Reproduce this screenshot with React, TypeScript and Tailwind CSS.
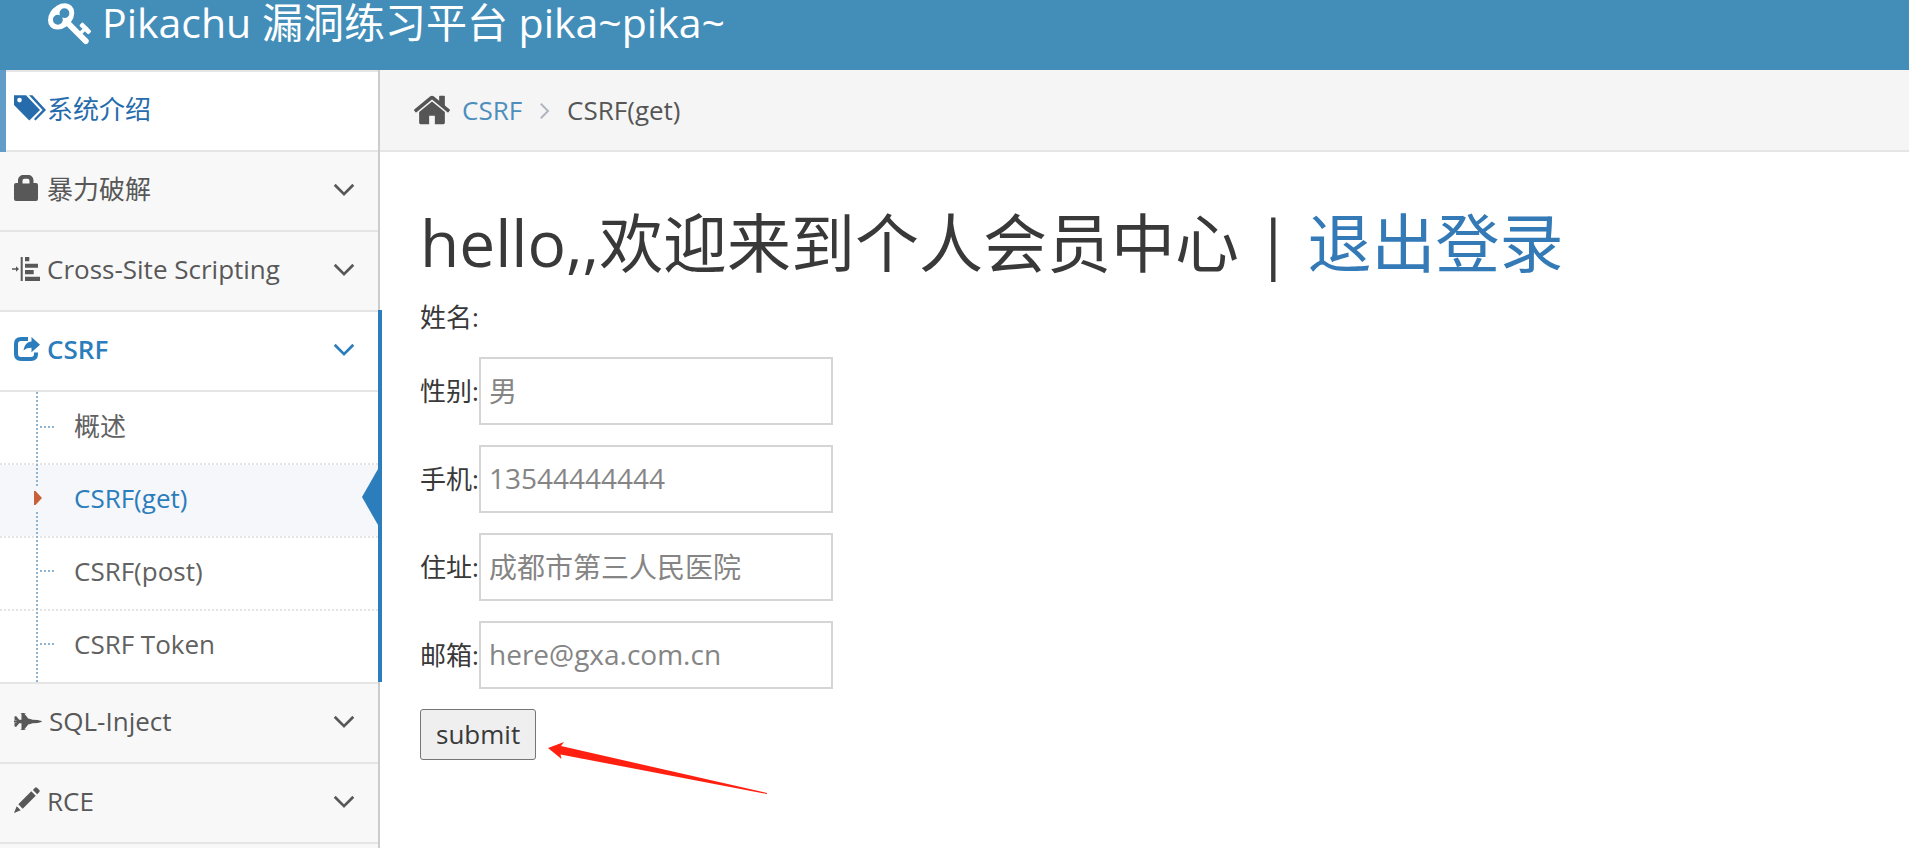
import type { ReactNode } from "react";

const ANGLE_DOWN =
  "M1395 736q0 13-10 23l-466 466q-10 10-23 10t-23-10l-466-466q-10-10-10-23t10-23l50-50q10-10 23-10t23 10l393 393 393-393q10-10 23-10t23 10l50 50q10 10 10 23z";
const ANGLE_RIGHT =
  "M1171 960q0 13-10 23l-466 466q-10 10-23 10t-23-10l-50-50q-10-10-10-23t10-23l393-393-393-393q-10-10-10-23t10-23l50-50q10-10 23-10t23 10l466 466q10 10 10 23z";
const KEY =
  "M832 512q0-80-56-136t-136-56-136 56-56 136q0 42 19 83-41-19-83-19-80 0-136 56t-56 136 56 136 136 56 136-56 56-136q0-42-19-83 41 19 83 19 80 0 136-56t56-136zm851 704q0 17-49 66t-66 49q-9 0-28.5-16t-36.5-33-38.5-40-24.5-26l-96 96 220 220q28 28 28 68 0 42-39 81t-81 39q-40 0-68-28l-671-671q-176 131-365 131-163 0-265.5-102.5t-102.5-265.5q0-160 95-313t248-248 313-95q163 0 265.5 102.5t102.5 265.5q0 189-131 365l355 355 96-96q-3-3-26-24.5t-40-38.5-33-36.5-16-28.5q0-17 49-66t66-49q13 0 23 10 6 6 46 44.5t82 79.5 86.5 86 73 78 28.5 41z";
const HOME =
  "M1472 992v480q0 26-19 45t-45 19h-384v-384h-256v384h-384q-26 0-45-19t-19-45v-480q0-1 .5-3t.5-3l575-474 575 474q1 2 1 6zm223-69l-62 74q-8 9-21 11h-3q-13 0-21-7l-692-577-692 577q-12 8-24 7-13-2-21-11l-62-74q-8-10-7-23.5t11-21.5l719-599q32-26 76-26t76 26l244 204v-195q0-14 9-23t23-9h192q14 0 23 9t9 23v408l219 182q10 8 11 21.5t-7 23.5z";
const JET =
  "M1920 832q-1 32-288 96l-352 32-224 64h-64l-293 352h69q26 0 45 4.5t19 11.5-19 11.5-45 4.5h-96-160-64v-32h64v-416h-160l-192 224h-96l-32-32v-192h32v-32h128v-8l-192-24v-128l192-24v-8h-128v-32h-32v-192l32-32h96l192 224h160v-416h-64v-32h64 160 96q26 0 45 4.5t19 11.5-19 11.5-45 4.5h-69l293 352h64l224 64 352 32q128 28 200 52t80 34z";

function MenuIcon({ children }: { children: ReactNode }) {
  return (
    <svg viewBox="0 0 26 26" className="size-[26px] shrink-0 overflow-visible fill-current" aria-hidden="true">
      {children}
    </svg>
  );
}

const TagsIcon = (
  <MenuIcon>
    <path
      fillRule="evenodd"
      d="M0-.7H12L26 14 15.3 24.5 0 9ZM5.5 1.8a2.3 2.3 0 1 0 0 4.6a2.3 2.3 0 1 0 0-4.6Z"
    />
    <path d="M15-.7h3.4L32 14 21.5 24.5 20 23l8.6-9Z" />
  </MenuIcon>
);

const LockIcon = (
  <MenuIcon>
    <path
      fillRule="evenodd"
      d="M4 7V4.5C4 1 6.5-1 9.500-1h4.500C17 -1 19.500 1 19.500 4.500V7h2.500a2 2 0 0 1 2 2v14a2 2 0 0 1-2 2H2a2 2 0 0 1-2-2V9a2 2 0 0 1 2-2ZM8.500 7.500h7V5c0-1.500-.8-2.300-2-2.300h-3c-1.200 0-2 .8-2 2.300Z"
    />
  </MenuIcon>
);

const AlignIcon = (
  <MenuIcon>
    <path d="M-2 12.300H2V10.300L5 13l-3 2.700V13.700H-2ZM6.700 1h2v24h-2ZM11 1h4.300v4.300H11ZM11 7.700h13v4H11ZM11 14h8.700v4.300H11ZM11 20.700h15V25H11Z" />
  </MenuIcon>
);

const ShareIcon = (
  <MenuIcon>
    <path
      d="M14 3H7Q2 3 2 8v10q0 5 5 5h10q5 0 5-5v-1.500"
      className="fill-none stroke-current"
      strokeWidth="4"
    />
    <path
      d="M17.500 1 26 8.700l-8.500 7.500v-4.400c-3.500 0-5.500.6-8 2.700C10.500 9 13 6 17.500 5.600Z"
      stroke="white"
      strokeWidth="1"
      paintOrder="stroke"
    />
  </MenuIcon>
);

const JetIcon = (
  <svg viewBox="0 256 1920 1152" className="h-[17px] w-[28px] shrink-0 fill-current" aria-hidden="true">
    <path d={JET} />
  </svg>
);

const PencilIcon = (
  <MenuIcon>
    <path d="M0 25 2.700 18.300 6.700 22.300ZM4.300 16.300 17.300 3.300 21.700 7.700 8.700 20.700ZM18.900 1.900 21 -.2q1-1 2 0L25.300 2q1 1 0 2L23.200 6.200Z" />
  </MenuIcon>
);

type Item = { label: string; icon: ReactNode; kind?: "intro" | "open" };

function MenuLink({ item }: { item: Item }) {
  const tone =
    item.kind === "intro"
      ? "bg-white text-[#266cad]"
      : item.kind === "open"
        ? "bg-white font-semibold text-[#2b7dbc]"
        : "bg-[#f8f8f8] text-[#585858]";
  return (
    <a href="#" className={`flex h-[78px] items-center gap-[7px] pr-4 pb-1 pl-3.5 ${tone}`}>
      {item.icon}
      <span className="flex-1">{item.label}</span>
      {item.kind !== "intro" && (
        <svg viewBox="0 0 1792 1792" className="size-9 fill-current" aria-hidden="true">
          <path d={ANGLE_DOWN} />
        </svg>
      )}
    </a>
  );
}

const subItems = ["概述", "CSRF(get)", "CSRF(post)", "CSRF Token"];

function SubMenu() {
  return (
    <ul className="relative bg-white">
      {subItems.map((label, i) => {
        const active = i === 1;
        return (
          <li key={label}>
            {i > 0 && (
              <div className="h-0.5 bg-[repeating-linear-gradient(90deg,#e4e4e4_0_2px,transparent_2px_4px)]" />
            )}
            <a
              href="#"
              className={`relative flex h-[71px] items-center pl-[74px] ${i > 0 ? "pb-1.5" : "pb-1"} ${active ? "bg-[#f5f7fa] text-[#2b7dbc]" : "text-[#616161]"}`}
            >
              {label}
              {active ? (
                <>
                  <span className="absolute top-[21px] left-[34px] z-10 flex h-6 w-2 items-center bg-[#f5f7fa]">
                    <svg viewBox="0 0 8 14" className="h-3.5 w-2 fill-[#c86139]" aria-hidden="true">
                      <path d="M0 0h1.500L8 7 1.500 14H0Z" />
                    </svg>
                  </span>
                  <svg
                    viewBox="0 0 16 56"
                    className="absolute top-1 right-0 h-14 w-4 fill-[#2b7dbc]"
                    aria-hidden="true"
                  >
                    <path d="M16 0v56L0 28Z" />
                  </svg>
                </>
              ) : (
                <span
                  className={`absolute left-10 h-0.5 w-3.5 bg-[repeating-linear-gradient(90deg,#8fb3d3_0_2px,transparent_2px_4px)] ${i > 0 ? "top-8" : "top-[34px]"}`}
                />
              )}
            </a>
          </li>
        );
      })}
      <li
        aria-hidden="true"
        className="absolute inset-y-0 left-9 w-0.5 bg-[repeating-linear-gradient(180deg,#8fb3d3_0_2px,transparent_2px_4px)]"
      />
    </ul>
  );
}

const items: Item[] = [
  { label: "系统介绍", icon: TagsIcon, kind: "intro" },
  { label: "暴力破解", icon: LockIcon },
  { label: "Cross-Site Scripting", icon: AlignIcon },
  { label: "CSRF", icon: ShareIcon, kind: "open" },
  { label: "SQL-Inject", icon: JetIcon },
  { label: "RCE", icon: PencilIcon },
];

const fields = [
  { id: "sex", label: "性别:", value: "男" },
  { id: "phone", label: "手机:", value: "13544444444" },
  { id: "address", label: "住址:", value: "成都市第三人民医院" },
  { id: "email", label: "邮箱:", value: "here@gxa.com.cn" },
];

export default function App() {
  return (
    <div
      lang="zh-CN"
      className="flex h-screen flex-col overflow-hidden bg-white font-['Open_Sans','Noto_Sans_CJK_SC',sans-serif] text-[26px] leading-[40px] text-[#393939]"
    >
      <header className="flex h-[70px] shrink-0 items-start gap-2 bg-[#438eb9] pl-12 text-[41px] leading-[44px] text-white">
        <svg viewBox="0 0 1792 1792" className="size-[46px] shrink-0 fill-current" aria-hidden="true">
          <path d={KEY} />
        </svg>
        <a href="#">Pikachu 漏洞练习平台 pika~pika~</a>
      </header>

      <div className="flex min-h-0 flex-1">
        <nav className="w-[380px] shrink-0 border-r-2 border-[#ccc] bg-[#f8f8f8]">
          <ul className="border-t-2 border-[#e5e5e5]">
            {items.map((item) => (
              <li key={item.label} className="relative border-b-2 border-[#e5e5e5]">
                <MenuLink item={item} />
                {item.kind === "intro" && <span className="absolute -inset-y-0.5 left-0 w-1.5 bg-[#629cc9]" />}
                {item.kind === "open" && (
                  <>
                    <div className="h-0.5 bg-[#e5e5e5]" />
                    <SubMenu />
                    <span className="absolute -top-0.5 -right-1 bottom-0 w-1 bg-[#2b7dbc]" />
                  </>
                )}
              </li>
            ))}
          </ul>
        </nav>

        <main className="min-w-0 flex-1">
          <nav
            aria-label="breadcrumb"
            className="flex h-[82px] items-center border-b-2 border-[#e5e5e5] bg-[#f5f5f5] pl-8"
          >
            <svg viewBox="0 0 1792 1792" className="size-10 fill-[#555]" aria-hidden="true">
              <path d={HOME} />
            </svg>
            <a href="#" className="ml-2.5 text-[#4c8fbd]">
              CSRF
            </a>
            <svg viewBox="0 0 1792 1792" className="mr-2 ml-[9px] size-7 fill-[#b2b6bf]" aria-hidden="true">
              <path d={ANGLE_RIGHT} />
            </svg>
            <span className="text-[#555]">CSRF(get)</span>
          </nav>

          <div className="relative px-10 pt-[51px]">
            <h1 className="text-[64px] leading-[80px] whitespace-nowrap">
              hello,,欢迎来到个人会员中心 |{" "}
              <a href="#" className="text-[#337ab7]">
                退出登录
              </a>
            </h1>
            <form className="pt-[14px]" onSubmit={(e) => e.preventDefault()}>
              <p>姓名:</p>
              <div className="flex flex-col gap-5 pt-5 pb-5">
                {fields.map((f) => (
                  <div key={f.id} className="flex items-center">
                    <label htmlFor={f.id} className="w-[59px] shrink-0">
                      {f.label}
                    </label>
                    <input
                      id={f.id}
                      type="text"
                      defaultValue={f.value}
                      className="h-[68px] w-[354px] border-2 border-[#d5d5d5] bg-white px-2 pb-0.5 text-[28px] text-[#858585] outline-none"
                    />
                  </div>
                ))}
              </div>
              <button
                type="submit"
                className="flex h-[51px] items-center rounded-[3px] border border-[#767676] bg-[#efefef] px-[15px] pb-0.5"
              >
                submit
              </button>
            </form>
            <svg
              viewBox="548 742 220 53"
              className="absolute top-[590px] left-[168px] h-[53px] w-[220px] fill-[#ff2011]"
              aria-hidden="true"
            >
              <path d="M548 748 564 742 561 746 767 793V794L560.500 754.500 561.500 759Z" />
            </svg>
          </div>
        </main>
      </div>
    </div>
  );
}
